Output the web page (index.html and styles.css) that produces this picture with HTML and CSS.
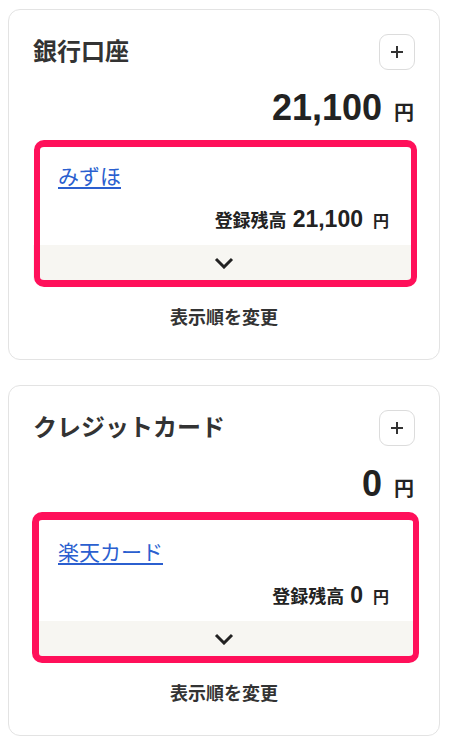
FILE: index.html
```html
<!DOCTYPE html>
<html lang="ja">
<head>
<meta charset="utf-8">
<title>口座一覧</title>
<link rel="stylesheet" href="styles.css">
</head>
<body>
<main class="page">
  <section class="card">
    <div class="card-head">
      <h2 class="card-title">銀行口座</h2>
      <button class="add-btn" aria-label="追加">
        <svg width="14" height="14" viewBox="0 0 14 14"><path d="M7 1v12M1 7h12" stroke="#333" stroke-width="2" fill="none"/></svg>
      </button>
    </div>
    <div class="total"><span class="total-num">21,100</span><span class="total-yen">円</span></div>
    <div class="item item--bank">
      <div class="item-name"><a class="item-link" href="#">みずほ</a></div>
      <div class="balance"><span class="balance-label">登録残高</span><span class="balance-num">21,100</span><span class="balance-yen">円</span></div>
      <div class="item-foot">
        <svg width="20" height="12" viewBox="0 0 20 12"><polyline points="2,2 10,10 18,2" stroke="#222" stroke-width="3" fill="none"/></svg>
      </div>
    </div>
    <button class="sort-btn">表示順を変更</button>
  </section>

  <section class="card">
    <div class="card-head">
      <h2 class="card-title">クレジットカード</h2>
      <button class="add-btn" aria-label="追加">
        <svg width="14" height="14" viewBox="0 0 14 14"><path d="M7 1v12M1 7h12" stroke="#333" stroke-width="2" fill="none"/></svg>
      </button>
    </div>
    <div class="total"><span class="total-num">0</span><span class="total-yen">円</span></div>
    <div class="item item--card">
      <div class="item-name"><a class="item-link" href="#">楽天カード</a></div>
      <div class="balance"><span class="balance-label">登録残高</span><span class="balance-num">0</span><span class="balance-yen">円</span></div>
      <div class="item-foot">
        <svg width="20" height="12" viewBox="0 0 20 12"><polyline points="2,2 10,10 18,2" stroke="#222" stroke-width="3" fill="none"/></svg>
      </div>
    </div>
    <button class="sort-btn">表示順を変更</button>
  </section>
</main>
</body>
</html>
```

FILE: styles.css
```css
* { box-sizing: border-box; }

html, body {
  margin: 0;
  background: #ffffff;
}

body {
  padding: 9px 10px 0 8px;
  font-family: "Liberation Sans", "Noto Sans CJK JP", sans-serif;
  color: #333333;
}

.card {
  border: 1px solid #e3e3e3;
  border-radius: 12px;
  padding: 24px 24px 29px;
  background: #ffffff;
}

.card + .card {
  margin-top: 25px;
}

.card-head {
  display: flex;
  align-items: center;
  justify-content: space-between;
  height: 36px;
}

.card-title {
  margin: 0;
  font-size: 24px;
  line-height: 36px;
  font-weight: 700;
  color: #333333;
}

.add-btn {
  width: 36px;
  height: 36px;
  padding: 0;
  border: 1px solid #dcdcdc;
  border-radius: 9px;
  background: #ffffff;
  display: flex;
  align-items: center;
  justify-content: center;
}

.add-btn svg { display: block; }

.total {
  margin-top: 18px;
  height: 40px;
  display: flex;
  justify-content: flex-end;
  align-items: baseline;
  line-height: 40px;
  color: #222222;
  font-weight: 700;
}

.total-num {
  font-size: 36px;
}

.total-yen {
  font-size: 20px;
  margin-left: 12px;
  margin-right: 1px;
}

.item {
  position: relative;
  margin-top: 12px;
  padding-top: 22px;
  background: #ffffff;
}

.item::after {
  content: "";
  position: absolute;
  border-style: solid;
  border-color: #ff105a;
  border-radius: 10px;
  pointer-events: none;
}

.item--bank::after {
  top: 0;
  left: 1px;
  right: -2px;
  bottom: -7px;
  border-width: 7px 6px;
}

.item--card::after {
  top: -4px;
  left: -1px;
  right: -4px;
  bottom: -7px;
  border-width: 8px 6px 7px 7px;
}

.item-name {
  padding-left: 25px;
  line-height: 30px;
  height: 30px;
}

.item-link {
  font-size: 21px;
  color: #2b5fcf;
  text-decoration: underline;
  text-underline-offset: 3px;
  text-decoration-thickness: 2px;
}

.balance {
  margin-top: 15px;
  height: 26px;
  padding-right: 26px;
  display: flex;
  justify-content: flex-end;
  align-items: baseline;
  line-height: 24px;
  font-weight: 700;
  color: #222222;
}

.balance-label {
  font-size: 18px;
}

.balance-num {
  font-size: 23px;
  margin-left: 6px;
}

.balance-yen {
  font-size: 16px;
  margin-left: 10px;
}

.item-foot {
  margin-top: 12px;
  height: 35px;
  background: #f7f6f2;
  display: flex;
  align-items: center;
  justify-content: center;
}

.item-foot svg { display: block; }

.sort-btn {
  display: block;
  margin: 26px auto 0;
  padding: 0;
  border: 0;
  background: none;
  font-family: inherit;
  font-size: 18px;
  line-height: 24px;
  font-weight: 700;
  color: #333333;
}
```
